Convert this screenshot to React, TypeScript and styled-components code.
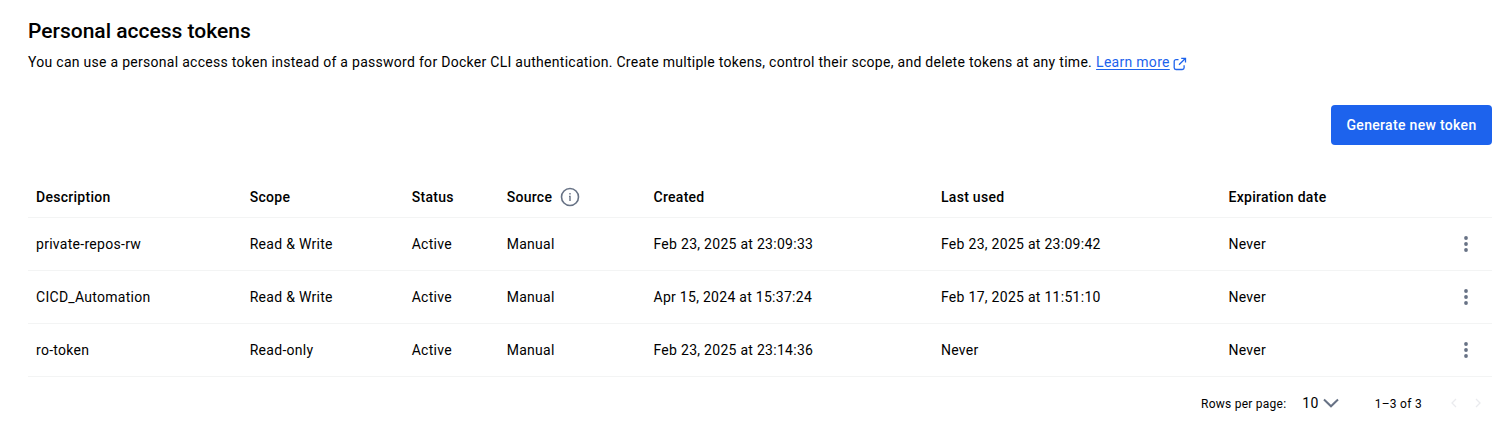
import React from "react";
import styled, { createGlobalStyle } from "styled-components";

const Global = createGlobalStyle`
  * { box-sizing: border-box; }
  body { margin: 0; background: #fff; color: #000; font: 400 14px/20px Roboto, sans-serif; letter-spacing: 0.284px; }
`;
const Page = styled.main`padding: 19px 17px 0 28px; height: 444px; overflow: hidden;`;
const Title = styled.h1`margin: 0; font-size: 21px; line-height: 24px; font-weight: 500; letter-spacing: 0;`;
const Intro = styled.p`margin: 9px 0 0; line-height: 20px; display: flex;`;
const Learn = styled.a`margin-left: 4px; color: #1d63ed; text-decoration: underline; text-underline-offset: 2px;`;
const LinkIcon = styled.svg`width: 14px; height: 14px; margin: 5px 0 0 3.5px; color: #1d63ed;`;
const Actions = styled.div`display: flex; justify-content: flex-end; margin-top: 33px;`;
const Button = styled.button`width: 161px; height: 40px; padding: 0; border: 0; border-radius: 4px; background: #1d63ed; color: #fff; font: 500 14px/20px Roboto, sans-serif; letter-spacing: 0.32px;`;
const Table = styled.div`margin-top: 32px;`;
const Row = styled.div<{ $head?: boolean }>`
  display: grid; grid-template-columns: 213.7px 162px 95px 146.8px 287.5px 287.5px 1fr 52px;
  align-items: center; height: ${p => (p.$head ? 41 : 53)}px; padding-left: 8px;
  border-bottom: 1px solid #f3f4f4; font-weight: ${p => (p.$head ? 500 : 400)};
`;
const Cell = styled.div`display: flex; align-items: center; white-space: nowrap;`;
const InfoIcon = styled.svg`width: 20px; height: 20px; margin-left: 8px; color: #677285;`;
const MenuIcon = styled.svg`width: 24px; height: 24px; margin-left: 14px; color: #677285;`;
const Footer = styled.footer`display: flex; align-items: center; height: 52px; font-size: 12px;`;
const Label = styled.span`margin: 1px 0 0 auto; letter-spacing: 0.25px;`;
const Size = styled.span`margin-left: 16px; font-size: 14px;`;
const Chevron = styled.svg`width: 16px; height: 16px; color: #677285; margin-left: 4px;`;
const Range = styled.span`margin: 1px 0 0 36px;`;
const Pager = styled.div`display: flex; gap: 12px; margin: 0 8px 0 26px; color: #eaebee;`;
const Arrow = styled.svg`width: 12px; height: 12px;`;

const heads = ["Description", "Scope", "Status", "Source", "Created", "Last used", "Expiration date"];
const tokens = [
  ["private-repos-rw", "Read & Write", "Active", "Manual", "Feb 23, 2025 at 23:09:33", "Feb 23, 2025 at 23:09:42", "Never"],
  ["CICD_Automation", "Read & Write", "Active", "Manual", "Apr 15, 2024 at 15:37:24", "Feb 17, 2025 at 11:51:10", "Never"],
  ["ro-token", "Read-only", "Active", "Manual", "Feb 23, 2025 at 23:14:36", "Never", "Never"],
];

export default function App() {
  return (
    <Page>
      <Global />
      <Title>Personal access tokens</Title>
      <Intro>
        You can use a personal access token instead of a password for Docker CLI authentication. Create multiple tokens, control their scope, and delete tokens at any time.
        <Learn>Learn more</Learn>
        <LinkIcon viewBox="0 0 14 14" fill="none" stroke="currentColor" strokeWidth="1.3"><path d="M5.5 2.6H3A1.8 1.8 0 0 0 1.2 4.4v6.3A1.8 1.8 0 0 0 3 12.5h6.3a1.8 1.8 0 0 0 1.8-1.8V8.2M8.2 1.3h4.3v4.3M12.3 1.5 6 7.8" /></LinkIcon>
      </Intro>
      <Actions><Button>Generate new token</Button></Actions>
      <Table>
        <Row $head>
          {heads.map(h => (
            <Cell key={h}>{h}{h === "Source" && (
              <InfoIcon viewBox="0 0 20 20" fill="none" stroke="currentColor" strokeWidth="1.6"><circle cx="10" cy="10" r="8.5" /><path d="M9 9.4H10V13.9M10 6.1v1.5" strokeWidth="1.4" /></InfoIcon>
            )}</Cell>
          ))}
        </Row>
        {tokens.map(t => (
          <Row key={t[0]}>
            {t.map((v, i) => <Cell key={i}>{v}</Cell>)}
            <MenuIcon viewBox="0 0 24 24" fill="currentColor"><circle cx="12" cy="6" r="1.9" /><circle cx="12" cy="12" r="1.9" /><circle cx="12" cy="18" r="1.9" /></MenuIcon>
          </Row>
        ))}
      </Table>
      <Footer>
        <Label>Rows per page:</Label>
        <Size>10</Size>
        <Chevron viewBox="0 0 16 16" fill="none" stroke="currentColor" strokeWidth="2"><path d="m1 4.5 7 6.8 7-6.8" /></Chevron>
        <Range>1–3 of 3</Range>
        <Pager>
          <Arrow viewBox="0 0 12 12" fill="none" stroke="currentColor" strokeWidth="1.3"><path d="M8 2 4 6l4 4" /></Arrow>
          <Arrow viewBox="0 0 12 12" fill="none" stroke="currentColor" strokeWidth="1.3"><path d="m4 2 4 4-4 4" /></Arrow>
        </Pager>
      </Footer>
    </Page>
  );
}
